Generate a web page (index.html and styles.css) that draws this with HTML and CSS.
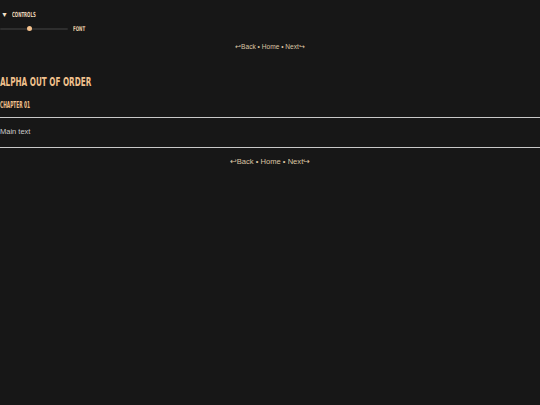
FILE: index.html
```html
<!DOCTYPE html>
<html>
<head>
<meta charset="utf-8">
<link rel="stylesheet" href="styles.css">
</head>
<body>
<div class="controls">
  <div class="summary"><span class="tri">▼</span><span class="cond">CONTROLS</span></div>
  <div class="row">
    <div class="slider"><span class="thumb"></span></div>
    <span class="label cond">FONT</span>
  </div>
</div>
<nav class="nav top">↩Back • Home • Next↪</nav>
<h1 class="title"><span class="cond">ALPHA OUT OF ORDER</span></h1>
<h2 class="chapter"><span class="cond">CHAPTER 01</span></h2>
<hr class="rule">
<p class="main">Main text</p>
<hr class="rule">
<nav class="nav bottom">↩Back • Home • Next↪</nav>
</body>
</html>
```
FILE: styles.css
```css
html, body {
  margin: 0;
  padding: 0;
  background: #171717;
  height: 100%;
}
body {
  font-family: "Liberation Sans", Arial, sans-serif;
  color: #d8d0c4;
}
.cond {
  display: inline-block;
  font-family: "DejaVu Sans Condensed", "DejaVu Sans", sans-serif;
  font-weight: bold;
  transform: scaleX(0.62);
  transform-origin: left center;
  white-space: nowrap;
}
.controls {
  padding-top: 10px;
}
.summary {
  display: flex;
  align-items: center;
  font-size: 7px;
  color: #e8d4b8;
  height: 10px;
  line-height: 10px;
}
.tri {
  font-size: 7px;
  color: #f2e0c8;
  margin-right: 4px;
  margin-left: 1px;
}
.row {
  display: flex;
  align-items: center;
  gap: 5px;
  margin-top: 4px;
  height: 10px;
}
.slider {
  position: relative;
  width: 68px;
  height: 2px;
  background: #2e2e2e;
  border-radius: 1px;
}
.thumb {
  position: absolute;
  left: 27px;
  top: -2px;
  width: 5px;
  height: 5px;
  border-radius: 50%;
  background: #f3c08c;
}
.label {
  font-size: 6.5px;
  color: #e2c8a4;
}
.label.cond {
  transform: scaleX(0.68);
}
.nav {
  text-align: center;
  color: #dcc6a4;
}
.nav.top {
  font-size: 6.6px;
  margin-top: 8px;
  line-height: 10px;
}
.title {
  font-size: 13px;
  color: #f0c08c;
  margin: 23px 0 0 0;
  line-height: 14px;
}
.chapter {
  font-size: 8px;
  color: #f0c08c;
  margin: 12px 0 0 0;
  line-height: 10px;
}
.chapter .cond {
  transform: scaleX(0.6);
}
.rule {
  margin: 0;
  border: 0;
  height: 1px;
  background: #c8c8c8;
}
.chapter + .rule {
  margin-top: 6px;
}
.main {
  margin: 0;
  padding: 9px 0 10px;
  font-size: 7.5px;
  line-height: 10px;
  color: #cccccc;
}
.nav.bottom {
  font-size: 7.6px;
  margin-top: 9px;
  line-height: 10px;
}
```
